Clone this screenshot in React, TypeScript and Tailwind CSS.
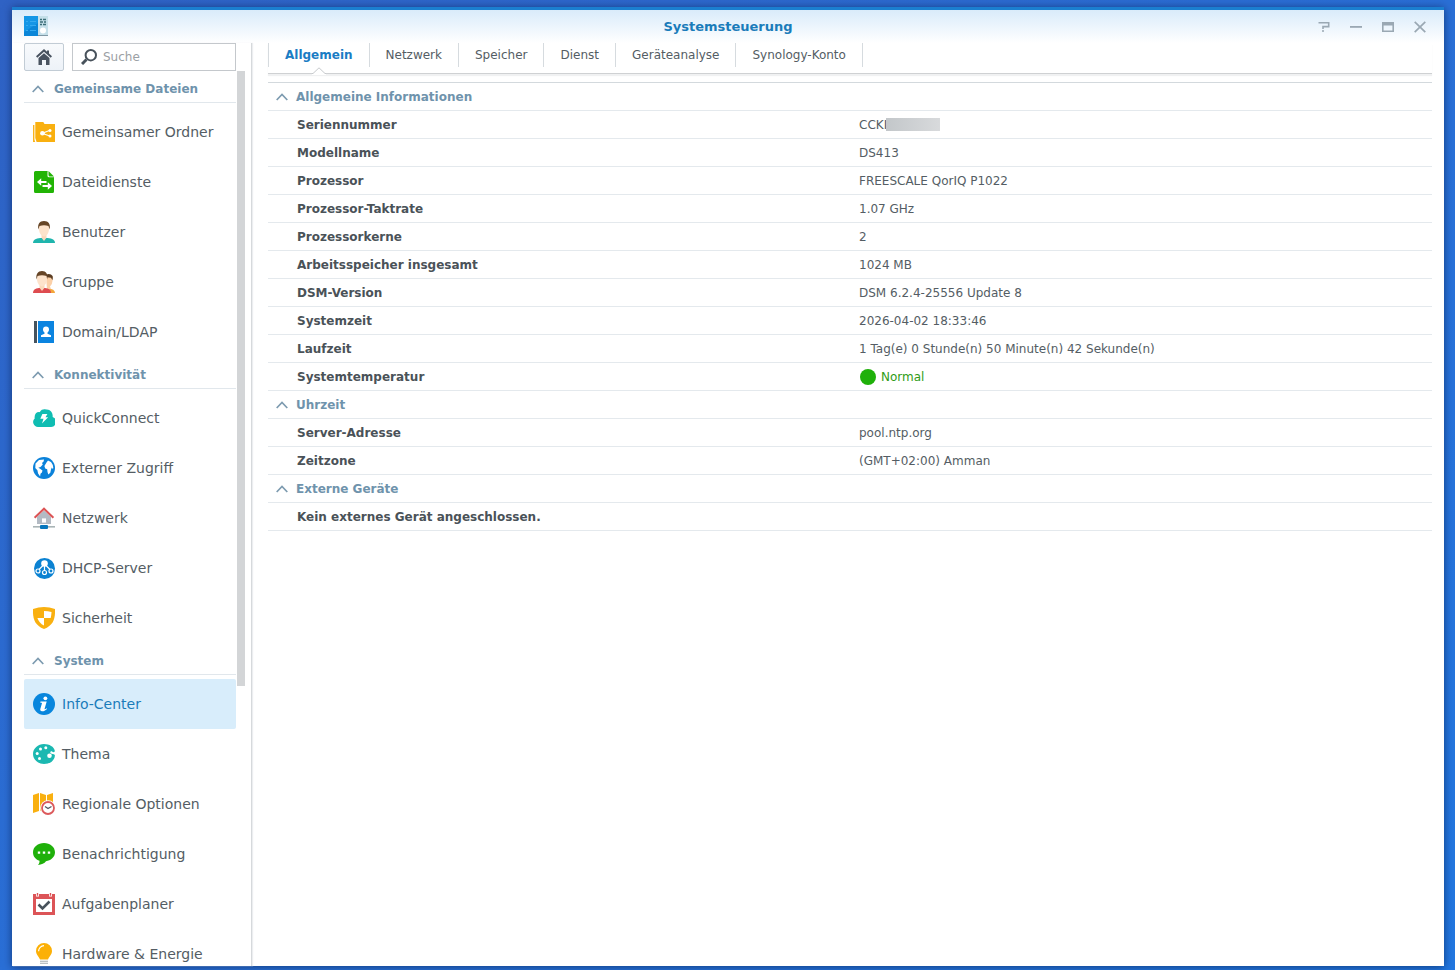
import type { ReactNode } from "react";

type IconProps = { children: ReactNode };

function Icon({ children }: IconProps) {
  return (
    <svg viewBox="0 0 22 22" className="size-[22px] shrink-0" aria-hidden="true">
      {children}
    </svg>
  );
}

function Chevron() {
  return (
    <svg viewBox="0 0 12 8" className="h-2 w-3 shrink-0" fill="none" stroke="#7d9bb0" strokeWidth="1.7" aria-hidden="true">
      <path d="M0.7 7 6 1.500 11.300 7" />
    </svg>
  );
}

const icons = {
  folder: (
    <Icon>
      <path d="M0 4h1.4v14.6l.8 2.4H0z" fill="#f9b41b" />
      <path d="M2.3 1h8l1.2 2H22v18H3.6L2.3 17z" fill="#f9b010" />
      <path d="M9.5 12.2 17 9.3M9.5 12.4l7.4 2.6" stroke="#fff" strokeWidth="1.1" />
      <circle cx="9.4" cy="12.3" r="2.3" fill="#fff" />
      <circle cx="17" cy="9.4" r="1.5" fill="#fff" />
      <circle cx="17" cy="15" r="1.5" fill="#fff" />
    </Icon>
  ),
  file: (
    <Icon>
      <path d="M2.5 0H15v6h6v14.500a1.500 1.500 0 0 1-1.500 1.500h-17A1.500 1.500 0 0 1 1 20.500v-19A1.500 1.500 0 0 1 2.500 0z" fill="#22b405" />
      <path d="M14.500 0 21 6.300h-5A1.500 1.500 0 0 1 14.500 4.800z" fill="#fff" />
      <path d="M15.500 0 21 5.400H17a1.500 1.500 0 0 1-1.500-1.500z" fill="#22b405" />
      <path d="M4 11l4.200-3.800v2.700h5.300v2.200H8.200v2.700zM19 15l-4.200-3.800v2.700H9.500v2.200h5.300v2.700z" fill="#fff" />
    </Icon>
  ),
  user: (
    <Icon>
      <path d="M0 22c0-3.200 2.500-4.500 7.500-5h7c5 .500 7.500 1.800 7.500 5z" fill="#1fb5ad" />
      <path d="M8.500 13h5v3.800L11 20l-2.500-3.200z" fill="#fbd9bb" />
      <path d="M6 4.500Q11 1 16 4.500V9q-.5 5-5 6.500Q6.500 14 6 9z" fill="#fde3cb" />
      <path d="M5.400 8.500C4.400 3 6.500 0 11 0s6.800 3 5.600 8.500L15.500 5Q11 3.600 6.500 5z" fill="#664526" />
    </Icon>
  ),
  group: (
    <Icon>
      <path d="M15 17.500q7 .3 7 4.500h-6z" fill="#f3a63a" />
      <path d="M13 5h6.500v5q-.3 4-2.500 5.500l1 2.500-4 1z" fill="#fbd0a8" />
      <path d="M13 3.600q4.600-1.500 6.600 1.400.6 2-.2 4.200L18 6.800l-4-.6z" fill="#5a3c22" />
      <path d="M0 22c0-3.200 2-4.500 6-5h6c4 .5 6 1.800 6 5z" fill="#de4c50" />
      <path d="M6.500 13h5v3.800L9 20l-2.500-3.200z" fill="#fbd9bb" />
      <path d="M4 4.500Q9 1 14 4.500V9q-.5 5-5 6.500Q4.500 14 4 9z" fill="#fde3cb" />
      <path d="M3.600 8.500C2.600 3 5 0 9 0s6.300 3 5.200 8.500L13.500 5Q9 3.600 4.500 5z" fill="#664526" />
    </Icon>
  ),
  domain: (
    <Icon>
      <path d="M1 0h3v22H1z" fill="#45535e" />
      <path d="M5 0h16v22H5z" fill="#0b84e0" />
      <path d="M13 5.500a3 3 0 0 1 3 3c0 1.600-.7 2.400-1.500 3v1.300l3.500 1.400V16H8v-1.800l3.500-1.400v-1.300c-.8-.6-1.500-1.400-1.500-3a3 3 0 0 1 3-3z" fill="#fff" />
    </Icon>
  ),
  cloud: (
    <Icon>
      <path d="M5 20a5 5 0 0 1-3.300-8.600C1 7 4 4.600 6.700 5.200 8.500 2 11.500 2 13 2.600 17.500 2 20.300 6.500 19.600 10A5.200 5.200 0 0 1 17 20z" fill="#0fbdb2" />
      <path d="M9.400 7h5l-1.900 3.300h2.600L9 16.500l1.500-4.700H7.300z" fill="#fff" />
    </Icon>
  ),
  globe: (
    <Icon>
      <circle cx="11" cy="11" r="11" fill="#0b82da" />
      <path d="M2.500 6.500 6 3l5-.6-.4 2.200L9 6l.8 1.600L7.500 10l-2.200.7 1.800 1 2.400 1.800-.6 2-1.400 1.300-.4 2.800-2-3-.7-3.300L2.300 11z" fill="#fff" />
      <path d="M13.500 5.500 15 3.400l3 1.500 1.800 3 .5 3-.5 1-1-1.300L18 12.500l-.7 3.300-2 1.800-.8-2.500-.3-2.800-2-.8-.8-2.500z" fill="#fff" />
    </Icon>
  ),
  network: (
    <Icon>
      <path d="M4 9.700 11 3.600l7 6.100V17H4z" fill="#b3bac3" />
      <path d="M9 11.400h4v4.200H9z" fill="#fff" />
      <path d="M1.600 10.800 11 1.700l9.400 9.100" fill="none" stroke="#dc5354" strokeWidth="2" />
      <path d="M0 19h22v1.600H0z" fill="#a9b4b6" />
      <path d="M10 17h2v2h-2z" fill="#fff" />
      <rect x="7" y="18" width="8" height="4" rx="1" fill="#0877bd" />
    </Icon>
  ),
  dhcp: (
    <Icon>
      <circle cx="11.500" cy="11.500" r="10.500" fill="#0b82d2" />
      <g fill="none" stroke="#fff" strokeWidth="1.200">
        <path d="M11.500 8v5M10.500 8 6 12.500M12.500 8l4.500 4.500" />
        <circle cx="5" cy="14" r="2" />
        <circle cx="11.500" cy="15.500" r="2" />
        <circle cx="18" cy="14" r="2" />
      </g>
      <circle cx="11.500" cy="6.500" r="3.300" fill="#fff" />
    </Icon>
  ),
  shield: (
    <Icon>
      <path d="M0 2q5.500-2 11-2t11 2c.3 9-1 16-11 20C1 18 -.3 11 0 2z" fill="#f9b010" />
      <path d="M11 4q4 0 7.500 1-.1 3-.8 6H11z" fill="#fff" />
      <path d="M4.400 11H11v7.600Q6 16 4.400 11z" fill="#fff" />
    </Icon>
  ),
  info: (
    <Icon>
      <circle cx="11" cy="11" r="11" fill="#0886dd" />
      <circle cx="12.400" cy="5.300" r="1.900" fill="#fff" />
      <path d="M7.500 8.500h6.200l-2.100 7.200c-.2.800.7.700 2-.4l.4.700c-2 2-3.700 2.500-5 2.300-1.500-.2-2-1.200-1.700-2.400l1.600-5.400q.2-.7-.4-.8H7.300z" fill="#fff" />
    </Icon>
  ),
  palette: (
    <Icon>
      <path d="M11 1c5.500 0 10 2.800 10.800 6.700.2 1.500-1.600 1.800-2.400 1-1.500-1.300-2.800.3-1.800 1.500 1 1.200 4 .3 4.300 2C21.800 17.500 17 21 11 21S0 16.500 0 11 5 1 11 1z" fill="#1bb8b1" />
      <g fill="#fff">
        <circle cx="7.500" cy="6" r="1.500" />
        <circle cx="12.800" cy="4.800" r="1.500" />
        <circle cx="4.200" cy="10.500" r="1.500" />
        <circle cx="6.500" cy="15.500" r="1.500" />
        <circle cx="16.500" cy="12.800" r="2.300" />
      </g>
    </Icon>
  ),
  region: (
    <Icon>
      <path d="M0 2l6-2v18L0 20zM7 0l6 2v18l-6-2.500zM14 2l6-2v16l-6 2z" fill="#f9b010" />
      <circle cx="15" cy="15" r="7.800" fill="#fff" />
      <circle cx="15" cy="15" r="6" fill="#fff" stroke="#dc5a5c" strokeWidth="1.800" />
      <path d="M12 13.500l3 2 3.500-2" fill="none" stroke="#4f5961" strokeWidth="1.300" />
    </Icon>
  ),
  bubble: (
    <Icon>
      <path d="M11 0c6 0 11 4 11 9.300 0 5-4.300 8.300-9 9-1.500 2-4.500 3.400-8 3.700 1.200-1.200 1.600-2.600 1.500-4.200C2.500 16.500 0 13.500 0 9.300 0 4 5 0 11 0z" fill="#1fb00a" />
      <path d="M4.800 8.500h2.400v2.200H4.800zM9.800 8.500h2.400v2.200H9.800zM14.800 8.500h2.400v2.200h-2.400z" fill="#fff" />
    </Icon>
  ),
  calendar: (
    <Icon>
      <path d="M0 1h3v2.500h3V1h10v2.500h3V1h3v21H0z" fill="#dc5457" />
      <path d="M3.800 0h1.400v2.700H3.800zM16.800 0h1.400v2.700h-1.400z" fill="#dc5457" />
      <path d="M3 6h16v13H3z" fill="#fff" />
      <path d="M5.500 11.500l4 4 7-7" fill="none" stroke="#48525b" strokeWidth="2.600" />
    </Icon>
  ),
  bulb: (
    <Icon>
      <path d="M11 0a8 8 0 0 1 8 8c0 3.500-3 5.500-4 8.500H7C6 13.500 3 11.500 3 8a8 8 0 0 1 8-8z" fill="#fcb006" />
      <path d="M5.600 8.300A5.600 5.600 0 0 1 11 2.700" fill="none" stroke="#fff" strokeWidth="1.200" />
      <path d="M7 17.700h8v1H7zM7 19.700h8v1H7z" fill="#a4acb0" />
    </Icon>
  ),
};

type NavItem = { label: string; icon: keyof typeof icons };

const groups: { title: string; items: NavItem[] }[] = [
  {
    title: "Gemeinsame Dateien",
    items: [
      { label: "Gemeinsamer Ordner", icon: "folder" },
      { label: "Dateidienste", icon: "file" },
      { label: "Benutzer", icon: "user" },
      { label: "Gruppe", icon: "group" },
      { label: "Domain/LDAP", icon: "domain" },
    ],
  },
  {
    title: "Konnektivität",
    items: [
      { label: "QuickConnect", icon: "cloud" },
      { label: "Externer Zugriff", icon: "globe" },
      { label: "Netzwerk", icon: "network" },
      { label: "DHCP-Server", icon: "dhcp" },
      { label: "Sicherheit", icon: "shield" },
    ],
  },
  {
    title: "System",
    items: [
      { label: "Info-Center", icon: "info" },
      { label: "Thema", icon: "palette" },
      { label: "Regionale Optionen", icon: "region" },
      { label: "Benachrichtigung", icon: "bubble" },
      { label: "Aufgabenplaner", icon: "calendar" },
      { label: "Hardware & Energie", icon: "bulb" },
    ],
  },
];

const tabs = ["Allgemein", "Netzwerk", "Speicher", "Dienst", "Geräteanalyse", "Synology-Konto"];

const sections: { title: string; rows: [string, ReactNode?][] }[] = [
  {
    title: "Allgemeine Informationen",
    rows: [
      [
        "Seriennummer",
        <span className="flex items-center">
          CCKI
          <span className="-ml-px h-[13px] w-[54px] bg-linear-to-r from-[#c3c7ca] to-[#d8dadc]" />
        </span>,
      ],
      ["Modellname", "DS413"],
      ["Prozessor", "FREESCALE QorIQ P1022"],
      ["Prozessor-Taktrate", "1.07 GHz"],
      ["Prozessorkerne", "2"],
      ["Arbeitsspeicher insgesamt", "1024 MB"],
      ["DSM-Version", "DSM 6.2.4-25556 Update 8"],
      ["Systemzeit", "2026-04-02 18:33:46"],
      ["Laufzeit", "1 Tag(e) 0 Stunde(n) 50 Minute(n) 42 Sekunde(n)"],
      [
        "Systemtemperatur",
        <span className="flex items-center gap-[5px] pl-px text-[#2f9c16]">
          <span className="size-4 rounded-full bg-[#1fb00a]" />
          Normal
        </span>,
      ],
    ],
  },
  {
    title: "Uhrzeit",
    rows: [
      ["Server-Adresse", "pool.ntp.org"],
      ["Zeitzone", "(GMT+02:00) Amman"],
    ],
  },
  { title: "Externe Geräte", rows: [["Kein externes Gerät angeschlossen."]] },
];

function TitleBar() {
  const control = "flex h-8 w-8 items-center justify-center";
  return (
    <header className="grid h-[33px] shrink-0 grid-cols-[1fr_auto_1fr] items-center bg-linear-to-b from-[#d9ebfa] to-white px-2">
      <svg viewBox="0 0 24 20" className="mt-1.5 ml-1 h-5 w-6 self-start" aria-hidden="true">
        <path d="M0 0h14v20H0z" fill="#0a86d8" />
        <path d="M0 0h14v7L0 16z" fill="#1496e6" />
        <path d="M2 5.500h2M6 5.500h6M2 9.500h2M6 9.500h6M2 14.500h2M6 14.500h6" stroke="#35aaf0" />
        <path d="M14 0h10v19H14z" fill="#c4dfe9" />
        <path d="M16 3.500h2M19 3.500h3M16 6h3M20 6h2M16 8.500h2M19 8.500h3" stroke="#3c6e78" strokeWidth="1.400" />
        <circle cx="19" cy="14.500" r="3" fill="#fff" />
        <path d="M14 19h10v1H14z" fill="#7f98a5" />
      </svg>
      <h1 className="text-[13px] font-bold text-[#1a7cba]">Systemsteuerung</h1>
      <div className="flex justify-end">
        <button className={control} aria-label="Hilfe">
          <svg viewBox="0 0 12 12" className="size-3" fill="none" stroke="#9aa8b3" strokeWidth="1.600">
            <path d="M0.500 1.800H10.700V5.600H5V8M4 10h2" />
          </svg>
        </button>
        <button className={control} aria-label="Minimieren">
          <svg viewBox="0 0 12 12" className="size-3" fill="#9aa8b3">
            <path d="M0 5h12v1.800H0z" />
          </svg>
        </button>
        <button className={control} aria-label="Maximieren">
          <svg viewBox="0 0 12 12" className="size-3" fill="#9aa8b3">
            <path fillRule="evenodd" d="M0 1h12v10H0zM1.600 4.400v5h8.800v-5z" />
          </svg>
        </button>
        <button className={control} aria-label="Schließen">
          <svg viewBox="0 0 12 12" className="size-3" stroke="#9aa8b3" strokeWidth="1.700">
            <path d="M0.700 0.900 11.300 11.100M11.300 0.900 0.700 11.100" />
          </svg>
        </button>
      </div>
    </header>
  );
}

function Sidebar() {
  return (
    <aside className="flex w-[240px] shrink-0 flex-col border-r border-[#d6d9dc] pl-3 shadow-[1px_0_1px_#eceef0]">
      <div className="flex shrink-0 gap-2 pr-[15px]">
        <button
          aria-label="Startseite"
          className="flex h-7 w-10 items-center justify-center rounded-xs border border-[#c2ccd5] bg-linear-to-b from-[#f8fafc] to-[#edf2f8]"
        >
          <svg viewBox="0 0 16 16" className="size-4" fill="#48525f">
            <path d="M8 0 0 7.300 1.300 8.700 8 2.700l6.700 6L16 7.300l-3-2.700V1.500h-2v1.300z" />
            <path d="M8 4.200 2.500 9v7H6v-5h4v5h3.500V9z" />
          </svg>
        </button>
        <label className="flex h-7 min-w-0 flex-1 items-center gap-1.5 border border-[#c4c8cc] pl-2">
          <svg viewBox="0 0 16 16" className="size-4 shrink-0" fill="none" stroke="#48525b">
            <circle cx="9.800" cy="6.200" r="5.200" strokeWidth="2" />
            <path d="M5.500 10.500 1 15" strokeWidth="3" />
          </svg>
          <input
            type="text"
            aria-label="Suche"
            placeholder="Suche"
            className="w-full min-w-0 text-xs outline-none placeholder:text-[#9ba0a4]"
          />
        </label>
      </div>
      <div className="flex min-h-0 flex-1">
        <nav className="min-w-0 flex-1 overflow-hidden">
          {groups.map((group) => (
            <section key={group.title} className="pt-1">
              <h2 className="mb-1 border-b border-[#e1e7ec]">
                <button className="flex h-[27px] w-full items-center gap-2.5 pl-2 text-xs font-bold text-[#6f93ac]">
                  <Chevron />
                  {group.title}
                </button>
              </h2>
              {group.items.map((item) => (
                <a
                  key={item.label}
                  href="#"
                  aria-current={item.label === "Info-Center" ? "page" : undefined}
                  className="flex h-[50px] items-center gap-[7px] rounded-xs pl-[9px] text-sm whitespace-nowrap text-[#545d64] aria-[current=page]:bg-[#d8edfb] aria-[current=page]:text-[#1a7cba]"
                >
                  {icons[item.icon]}
                  {item.label}
                </a>
              ))}
            </section>
          ))}
        </nav>
        <div className="mr-1.5 ml-px w-2 shrink-0">
          <div className="h-11/16 bg-[#d3d5d7]" />
        </div>
      </div>
    </aside>
  );
}

function Tabs() {
  return (
    <div role="tablist" className="flex h-[31px] shrink-0 border-b border-[#cfd1d3] shadow-[0_2px_1px_#f0f1f2]">
      {tabs.map((tab, i) => (
        <button
          key={tab}
          role="tab"
          aria-selected={i === 0}
          className="relative h-6 border-r border-[#d6dbdf] px-4 text-xs text-[#545d64] first:border-l aria-selected:font-bold aria-selected:text-[#1a7cc4]"
        >
          {tab}
          {i === 0 && (
            <svg viewBox="0 0 14 8" className="absolute top-6 left-1/2 h-2 w-3.5 -translate-x-1/2" aria-hidden="true">
              <path d="M0 8V7L7 0.700 14 7v1z" fill="#fff" />
              <path d="M0 6.500h1L7 0.800l6 5.700h1" fill="none" stroke="#c6c9cc" />
            </svg>
          )}
        </button>
      ))}
    </div>
  );
}

function InfoSection({ title, rows }: (typeof sections)[number]) {
  return (
    <section>
      <h2 className="border-b border-[#e4e9ed]">
        <button className="flex h-[27px] w-full items-center gap-2 pl-2 text-xs font-bold text-[#6f93ac]">
          <Chevron />
          {title}
        </button>
      </h2>
      <table className="w-full table-fixed border-separate border-spacing-0 text-left text-xs text-[#545d64]">
        <tbody>
          {rows.map(([label, value]) => (
            <tr key={label}>
              <th scope="row" className="h-7 border-b border-[#e4e9ed] py-0 pl-[29px] font-bold text-[#4a5258]">
                {label}
              </th>
              <td className="h-7 border-b border-[#e4e9ed] py-0 pl-[9px]">{value}</td>
            </tr>
          ))}
        </tbody>
      </table>
    </section>
  );
}

export default function App() {
  return (
    <div className="h-screen bg-linear-to-br from-[#2f62c4] via-[#2a6fd6] to-[#2277e0] pt-[7px] pr-[11px] pb-1 pl-3 font-['Verdana','DejaVu_Sans',sans-serif]">
      <div className="flex h-full flex-col border-t-3 border-[#1b7fd0] bg-white shadow-[0_1px_8px_rgba(0,20,60,0.6)]">
        <TitleBar />
        <div className="flex min-h-0 flex-1">
          <Sidebar />
          <main className="flex min-w-0 flex-1 flex-col pr-3 pl-4">
            <Tabs />
            <div className="mt-2 border-t border-[#d3d9dd]">
              {sections.map((section) => (
                <InfoSection key={section.title} {...section} />
              ))}
            </div>
          </main>
        </div>
      </div>
    </div>
  );
}
